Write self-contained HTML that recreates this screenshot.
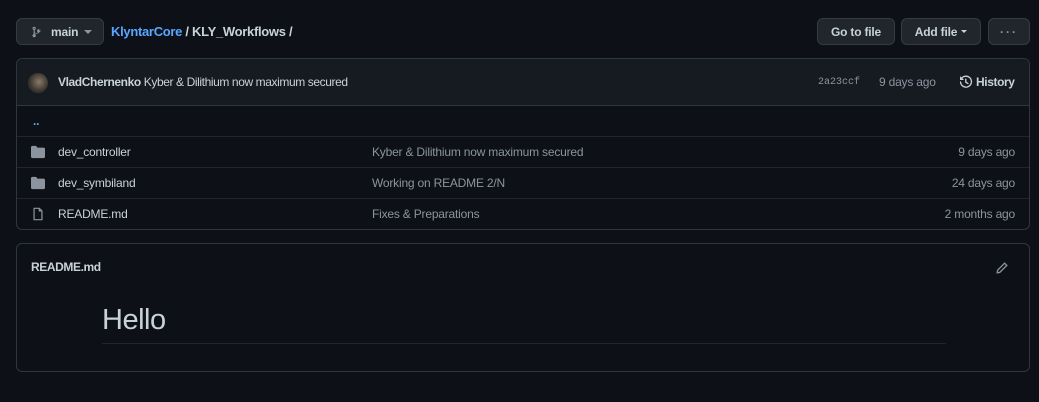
<!DOCTYPE html>
<html><head><style>
*{box-sizing:border-box;margin:0;padding:0}
body{width:1039px;height:402px;background:#0d1117;font-family:"Liberation Sans",sans-serif;color:#c9d1d9;font-size:12px;position:relative;overflow:hidden;letter-spacing:-0.2px}
.abs{position:absolute}
.btn{position:absolute;top:18px;height:27px;background:#21262d;border:1px solid #363b42;border-radius:6px;color:#c9d1d9;font-weight:bold;font-size:12px;display:flex;align-items:center;justify-content:center}
.box{position:absolute;left:16px;width:1014px;border:1px solid #30363d;border-radius:6px}
.row{position:absolute;left:0;right:0;height:31px;border-top:1px solid #21262d;display:flex;align-items:center}
.muted{color:#8b949e}
</style></head><body>
<div class="btn" style="left:16px;width:88px;justify-content:flex-start;padding-left:14px">
<svg width="12" height="12" viewBox="0 0 16 16" fill="#8b949e"><path d="M5 3.25a.75.75 0 11-1.5 0 .75.75 0 011.5 0zm0 2.12a2.25 2.25 0 10-1.5 0v5.260a2.25 2.25 0 101.5 0V9.5c.6.4 1.3.6 2 .6h1.5a2.5 2.5 0 002.2-1.4 2.25 2.25 0 10-1.6-.3c-.1.5-.5.9-1 .9H7a2 2 0 01-2-2zM11.5 6a.75.75 0 110-1.5.75.75 0 010 1.5zM4.25 12a.75.75 0 100 1.5.75.75 0 000-1.5z"/></svg>
<span style="margin-left:8px">main</span><span style="margin-left:6px;border:4px solid transparent;border-top-color:#8b949e;margin-top:4px"></span></div>
<div class="abs" style="left:111px;top:24px;font-size:13px;font-weight:bold;letter-spacing:-0.3px"><span style="color:#58a6ff">KlyntarCore</span> / KLY_Workflows /</div>
<div class="btn" style="left:817px;width:78px">Go to file</div>
<div class="btn" style="left:901px;width:80px">Add file <span style="margin-left:4px;border:3px solid transparent;border-top-color:#c9d1d9;margin-top:3px"></span></div>
<div class="btn" style="left:988px;width:42px;color:#8b949e;letter-spacing:2px">···</div>

<div class="box" style="top:58px;height:172px">
<div class="abs" style="left:0;top:0;right:0;height:46px;background:#161b22;border-radius:6px 6px 0 0"></div>
<div class="abs" style="left:11px;top:14px;width:20px;height:20px;border-radius:50%;background:radial-gradient(circle at 55% 45%,#8a7a66,#3a3530 60%,#222)"></div>
<div class="abs" style="left:41px;top:16px;font-size:12px;letter-spacing:-0.4px"><b>VladChernenko</b> Kyber &amp; Dilithium now maximum secured</div>
<div class="abs" style="left:801px;top:18px;font-family:'Liberation Mono',monospace;font-size:10px;letter-spacing:0" ><span class="muted">2a23ccf</span></div>
<div class="abs muted" style="left:862px;top:16px">9 days ago</div>
<svg class="abs" style="left:942px;top:16px" width="14" height="14" viewBox="0 0 16 16" fill="#c9d1d9"><path d="M1.6 1.6A.25.25 0 001.2 1.8v3.7c0 .1.1.25.25.25h3.7a.25.25 0 00.2-.4L3.9 3.9A5.5 5.5 0 112.5 8a.75.75 0 00-1.5 0A7 7 0 102.85 2.85zM7.75 4a.75.75 0 01.75.75v2.990l2.1 1.26a.75.75 0 11-.77 1.3L7.37 8.9A.75.75 0 017 8.25v-3.5A.75.75 0 017.75 4z"/></svg>
<div class="abs" style="left:959px;top:16px;font-weight:bold;letter-spacing:-0.4px">History</div>
<div class="row" style="top:46px;border-top-color:#30363d;height:31px"><span style="margin-left:16px;color:#58a6ff;font-weight:bold">..</span></div>
<div class="row" style="top:77px"><svg style="margin-left:14px" width="14" height="14" viewBox="0 0 16 16" fill="#8b949e"><path d="M1.75 1A1.75 1.75 0 000 2.75v10.5C0 14.2.8 15 1.75 15h12.5A1.75 1.75 0 0016 13.25v-8.5A1.75 1.75 0 0014.25 3H7.5a.25.25 0 01-.2-.1l-.9-1.2C6.07 1.26 5.55 1 5 1H1.75z"/></svg><span class="abs" style="left:41px">dev_controller</span><span class="abs muted" style="left:355px">Kyber &amp; Dilithium now maximum secured</span><span class="abs muted" style="right:14px">9 days ago</span></div>
<div class="row" style="top:108px"><svg style="margin-left:14px" width="14" height="14" viewBox="0 0 16 16" fill="#8b949e"><path d="M1.75 1A1.75 1.75 0 000 2.75v10.5C0 14.2.8 15 1.75 15h12.5A1.75 1.75 0 0016 13.25v-8.5A1.75 1.75 0 0014.25 3H7.5a.25.25 0 01-.2-.1l-.9-1.2C6.07 1.26 5.55 1 5 1H1.75z"/></svg><span class="abs" style="left:41px">dev_symbiland</span><span class="abs muted" style="left:355px">Working on README 2/N</span><span class="abs muted" style="right:14px">24 days ago</span></div>
<div class="row" style="top:139px"><svg style="margin-left:14px" width="14" height="14" viewBox="0 0 16 16" fill="none" stroke="#8b949e" stroke-width="1.4"><path d="M3.5 1.5h6l3 3v10h-9z M9.5 1.5v3h3"/></svg><span class="abs" style="left:41px">README.md</span><span class="abs muted" style="left:355px">Fixes &amp; Preparations</span><span class="abs muted" style="right:14px">2 months ago</span></div>
</div>

<div class="box" style="top:243px;height:129px">
<div class="abs" style="left:14px;top:16px;font-weight:bold;letter-spacing:-0.4px">README.md</div>
<svg class="abs" style="left:978px;top:17px" width="14" height="14" viewBox="0 0 16 16" fill="none" stroke="#8b949e" stroke-width="1.5"><path d="M11 2.5l2.5 2.5L5.5 13 2.5 13.5 3 10.5z"/></svg>
<div class="abs" style="left:85px;top:60px;font-size:29px;color:#c9d1d9;letter-spacing:-0.5px">Hello</div>
<div class="abs" style="left:85px;top:99px;width:844px;height:1px;background:#21262d"></div>
</div>
</body></html>
